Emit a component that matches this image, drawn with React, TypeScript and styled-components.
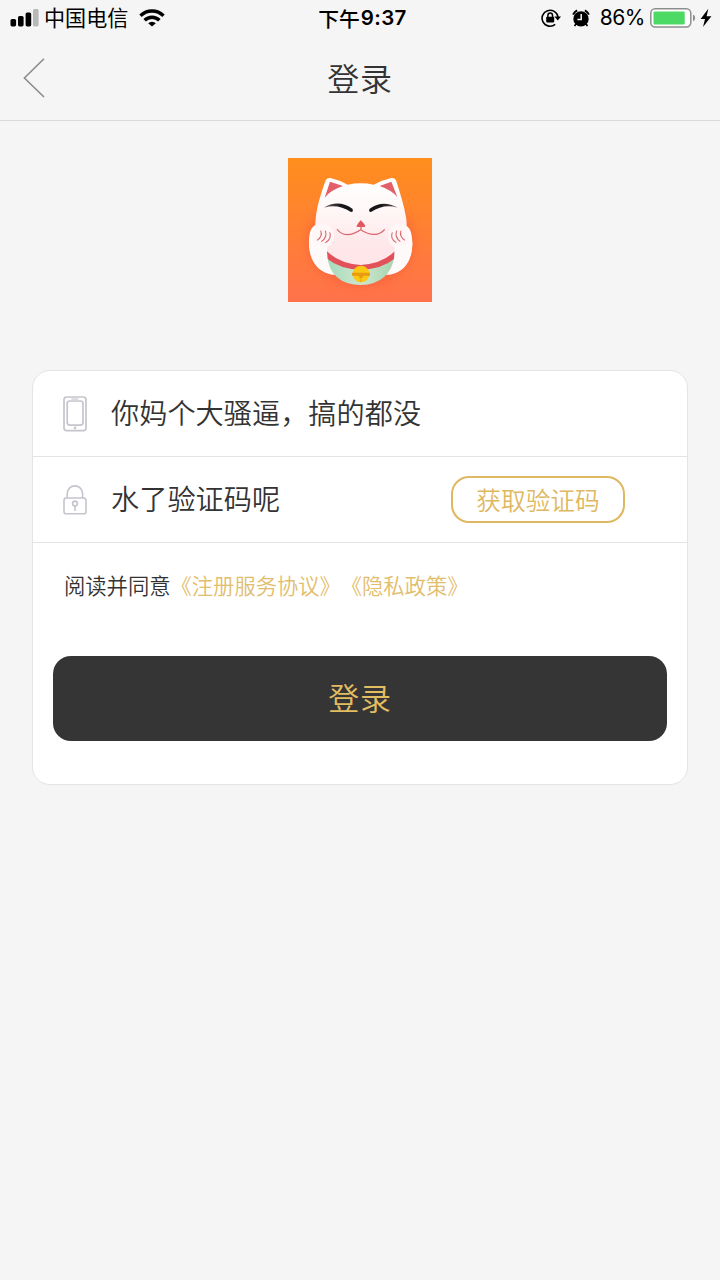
import React, { useState } from 'react';
import styled, { createGlobalStyle } from 'styled-components';

const GlobalStyle = createGlobalStyle`
  * {
    box-sizing: border-box;
  }
  body {
    margin: 0;
    background: #f5f5f5;
    font-family: "Noto Sans CJK SC", "Noto Sans", sans-serif;
  }
`;

const Page = styled.div`
  display: flex;
  flex-direction: column;
  width: 720px;
  height: 1280px;
  background: #f5f5f5;
  color: #333;
  overflow: hidden;
`;

const StatusBar = styled.div`
  display: grid;
  grid-template-columns: 1fr auto 1fr;
  grid-template-rows: 36px;
  align-items: center;
  height: 36px;
  padding: 0 8px 0 10px;
  color: #000;
`;

const StatusGroup = styled.div<{ $right?: boolean }>`
  display: flex;
  align-items: center;
  height: 36px;
  justify-content: ${(p) => (p.$right ? 'flex-end' : 'flex-start')};

  svg {
    flex: none;
    display: block;
  }
`;

const Carrier = styled.span`
  margin: 0 11px 0 5px;
  font-size: 21.1px;
  line-height: 34px;
  height: 36px;
`;

const Clock = styled.div`
  display: flex;
  align-items: center;
  height: 36px;
  padding-left: 3px;
  font-size: 20.8px;
  font-weight: 500;
  line-height: 35px;
`;

const Digits = styled.span`
  margin-left: 1px;
  font-family: Inter, "Noto Sans", sans-serif;
  font-size: 20.5px;
  font-weight: 600;
  line-height: 36px;
  letter-spacing: 0.35px;
`;

const Percent = styled.span`
  margin: 0 5px 0 10px;
  font-family: Inter, "Noto Sans", sans-serif;
  font-size: 21px;
  line-height: 36px;
  letter-spacing: -0.5px;
`;

const Header = styled.header`
  display: grid;
  grid-template-columns: 80px 1fr 80px;
  align-items: center;
  height: 85px;
  border-bottom: 1px solid #dadada;
`;

const BackButton = styled.button`
  display: flex;
  padding: 0 0 0 22px;
  border: none;
  background: none;
`;

const Title = styled.h1`
  height: 84px;
  margin: 0;
  font-size: 32px;
  font-weight: 350;
  line-height: 82px;
  letter-spacing: 0.8px;
  text-align: center;
`;

const Logo = styled.div`
  align-self: center;
  width: 144px;
  height: 144px;
  margin: 37px 0 68px;

  svg {
    display: block;
  }
`;

const Card = styled.main`
  display: flex;
  flex-direction: column;
  height: 415px;
  margin: 0 32px;
  border: 1px solid #e4e4e7;
  border-radius: 18px;
  background: #fff;
`;

const Row = styled.div`
  display: flex;
  align-items: center;
  height: 86px;
  padding: 0 62px 0 30px;
  border-bottom: 1px solid #e4e4e7;
`;

const RowIcon = styled.div`
  display: flex;
  width: 25px;
  margin-right: 23px;
`;

const Field = styled.div`
  flex: 1;
  height: 85px;
  font-size: 28.2px;
  font-weight: 350;
  line-height: 82px;
  white-space: nowrap;
`;

const CodeButton = styled.button`
  width: 174px;
  height: 47px;
  padding: 0 0 1px;
  border: 2px solid #dfb862;
  border-radius: 18px;
  background: #fff;
  color: #dfb862;
  font-family: inherit;
  font-size: 24.7px;
  font-weight: 350;
  line-height: 42px;
`;

const Terms = styled.p`
  margin: 25px 0 54px 31px;
  font-size: 21.3px;
  font-weight: 350;
  line-height: 34px;
  white-space: nowrap;
`;

const TermsLink = styled.a`
  margin-right: 10.5px;
  color: #e2bd6c;
`;

const LoginButton = styled.button`
  height: 85px;
  margin: 0 20px;
  padding: 0 0 3px;
  border: none;
  border-radius: 18px;
  background: #353535;
  color: #e2bd62;
  font-family: inherit;
  font-size: 31px;
  font-weight: 350;
  line-height: 82px;
  letter-spacing: 0.8px;
`;

const SignalIcon = () => (
  <svg width="29" height="18" viewBox="0 0 29 18">
    <rect x="0.5" y="10" width="5.6" height="7.4" rx="1.6" />
    <rect x="8" y="7" width="5.6" height="10.4" rx="1.6" />
    <rect x="15.6" y="3.5" width="5.6" height="13.9" rx="1.6" />
    <rect x="23" y="0" width="5.6" height="17.4" rx="1.6" fill="#b8b8b8" />
  </svg>
);

const WifiIcon = () => (
  <svg width="26" height="18" viewBox="0 0 26 18" fill="none" stroke="#000" strokeWidth="3.4">
    <path d="M1.5 6.8 A16.2 16.2 0 0 1 24.5 6.8" />
    <path d="M5.6 11.3 A10.4 10.4 0 0 1 20.4 11.3" />
    <path d="M13 17.6 L9.2 14.2 A5.4 5.4 0 0 1 16.8 14.2 Z" fill="#000" stroke="none" />
  </svg>
);

const RotationLockIcon = () => (
  <svg width="20" height="20" viewBox="0 0 20 20" fill="none" stroke="#000" strokeWidth="1.6">
    <path d="M14.2 16.4 A8 8 0 1 1 17 9" />
    <path d="M13.4 8.6 H20 L16.8 12.6 Z" fill="#000" stroke="none" />
    <rect x="5.2" y="8.8" width="8" height="5.6" rx="0.8" fill="#000" stroke="none" />
    <path d="M6.9 9 V7.2 A2.3 2.3 0 0 1 11.5 7.2 V9" strokeWidth="1.5" />
  </svg>
);

const AlarmIcon = () => (
  <svg width="18" height="19" viewBox="0 0 18 19">
    <circle cx="9" cy="9.9" r="7.7" />
    <path d="M1.1 5.6 A10 10 0 0 1 5.1 1.4 M12.9 1.4 A10 10 0 0 1 16.9 5.6" fill="none" stroke="#000" strokeWidth="2.1" />
    <path d="M3.8 15 L2.6 17.2 M14.2 15 L15.4 17.2" stroke="#000" strokeWidth="1.6" />
    <path d="M9.2 5 V10.4 H5.4" fill="none" stroke="#f5f5f5" strokeWidth="1.5" />
  </svg>
);

const BatteryIcon = () => (
  <svg width="46" height="20" viewBox="0 0 46 20">
    <rect x="0.8" y="0.8" width="40" height="18.2" rx="4.4" fill="#fff" stroke="#8e8e8e" strokeWidth="1.5" />
    <rect x="3.5" y="3.4" width="31.2" height="13" rx="1.2" fill="#4cd964" />
    <path d="M43 6.6 Q45.2 7.6 45.2 9.9 Q45.2 12.2 43 13.2 Z" fill="#8e8e8e" />
  </svg>
);

const BoltIcon = () => (
  <svg width="12" height="20" viewBox="0 0 12 20">
    <path d="M8.3 0.8 L0.6 11 H5 L3 19 L11.4 8.2 H6.6 Z" />
  </svg>
);

const BackIcon = () => (
  <svg width="24" height="42" viewBox="0 0 24 42" fill="none" stroke="#8c8c8c" strokeWidth="1.6">
    <path d="M22 1.8 L2.4 21 L22 40" />
  </svg>
);

const PhoneIcon = () => (
  <svg width="24" height="36" viewBox="0 0 24 36" fill="none" stroke="#c5c5cd" strokeWidth="1.7">
    <rect x="1" y="1" width="22" height="33.6" rx="2.6" />
    <rect x="4.2" y="5" width="15.8" height="24.2" rx="2.6" />
    <path d="M8.4 3 H15.4" strokeWidth="1.2" />
    <circle cx="12" cy="31.9" r="1.3" fill="#c5c5cd" stroke="none" />
  </svg>
);

const LockIcon = () => (
  <svg width="24" height="30" viewBox="0 0 24 30" fill="none" stroke="#c5c5cd" strokeWidth="1.6">
    <rect x="1" y="13" width="22" height="15.8" rx="2.4" />
    <path d="M4.2 13 V8.6 A7.7 7.7 0 0 1 19.6 8.6 V13" />
    <circle cx="12" cy="18.5" r="2.4" />
    <path d="M12 21 V26" />
  </svg>
);

const LuckyCat = () => (
  <svg width="144" height="144" viewBox="24 24 432 432">
    <defs>
      <linearGradient id="bg" x1="0" y1="0" x2="0" y2="1">
        <stop offset="0" stopColor="#ff8e1c" />
        <stop offset="1" stopColor="#ff724b" />
      </linearGradient>
      <linearGradient id="face" x1="0" y1="0" x2="0" y2="1">
        <stop offset="0" stopColor="#ffffff" />
        <stop offset="0.3" stopColor="#fff9f9" />
        <stop offset="0.7" stopColor="#ffe8ea" />
        <stop offset="1" stopColor="#ffe6e8" />
      </linearGradient>
      <linearGradient id="paw" x1="0" y1="0" x2="0" y2="1">
        <stop offset="0" stopColor="#ffffff" />
        <stop offset="1" stopColor="#fff3f3" />
      </linearGradient>
      <linearGradient id="bib" x1="0" y1="0" x2="1" y2="0">
        <stop offset="0" stopColor="#a5d9bb" />
        <stop offset="0.5" stopColor="#cde6cf" />
        <stop offset="1" stopColor="#a5d5ae" />
      </linearGradient>
      <linearGradient id="browLeft" x1="0" y1="0" x2="1" y2="0">
        <stop offset="0" stopColor="#665555" />
        <stop offset="0.6" stopColor="#171719" />
      </linearGradient>
      <linearGradient id="browRight" x1="1" y1="0" x2="0" y2="0">
        <stop offset="0" stopColor="#665555" />
        <stop offset="0.6" stopColor="#171719" />
      </linearGradient>
      <filter id="shade" x="-20%" y="-20%" width="140%" height="140%">
        <feGaussianBlur stdDeviation="14" />
      </filter>
    </defs>
    <rect x="24" y="24" width="432" height="432" fill="url(#bg)" />
    <ellipse cx="242" cy="275" rx="162" ry="136" fill="#f2503a" opacity="0.4" filter="url(#shade)" />
    {/* body and arms */}
    <path d="M112 222 C92 230 86 248 87 284 C89 332 112 366 158 374 L328 374 C374 366 396 330 397 284 C397 248 390 228 368 222 Z" fill="url(#paw)" />
    {/* head */}
    <path d="M137 91 Q141 83 151 84 Q178 90 203 104 Q242 96 281 104 Q307 90 334 84 Q344 83 348 91 C360 129 373 169 379 207 C384 259 369 305 343 329 Q294 362 242 360 Q190 362 141 325 C115 303 105 266 106 220 C108 174 123 131 137 91 Z" fill="url(#face)" />
    <path d="M150 95 L189 108 Q152 120 134 143 Z" fill="#e2606a" />
    <path d="M334 95 L299 108 Q334 120 352 141 Z" fill="#e2606a" />
    <path d="M132 173 Q174 147 217 176 Q222 185 213 186 Q173 160 132 173 Z" fill="url(#browLeft)" />
    <path d="M353 173 Q309 148 269 176 Q264 185 273 186 Q312 160 353 173 Z" fill="url(#browRight)" />
    <path d="M242 211 Q249 217 256 227 Q257 231 250 231 H235 Q228 231 230 227 Q236 217 242 211 Z" fill="#e2565f" />
    <path d="M243 230 V238 M171 237 C186 259 213 259 242 239 C272 259 299 257 314 238" fill="none" stroke="#d9666c" strokeWidth="3.8" />
    {/* collar, bib and bell */}
    <path d="M141 315 Q151 404 242 405 Q331 403 344 315 Q304 351 242 350 Q181 350 141 315 Z" fill="url(#bib)" />
    <path d="M141 304 Q179 341 242 345 Q307 341 344 304 L343 326 Q306 357 242 359 Q179 357 142 326 Z" fill="#e2515a" />
    {/* paws */}
    <ellipse cx="129" cy="257" rx="33" ry="37" fill="#fff6f7" />
    <ellipse cx="356" cy="257" rx="32" ry="37" fill="#fff6f7" />
    <path d="M87 276 C89 332 112 366 158 374 Q140 350 141 292 Z" fill="#fffafa" />
    <path d="M397 276 C396 332 374 366 328 374 Q344 350 344 292 Z" fill="#fffafa" />
    <path d="M122 242 Q129 260 111 271 M136 242 Q143 262 124 275 M149 247 Q157 266 136 278" fill="none" stroke="#d9666c" strokeWidth="3.2" />
    <path d="M363 242 Q357 260 375 271 M350 242 Q343 262 361 275 M337 247 Q329 266 349 278" fill="none" stroke="#d9666c" strokeWidth="3.2" />
    <circle cx="243" cy="372" r="25" fill="#fdc811" />
    <path d="M216 368 H270 V377 H250 Q250 384 243 384 Q236 384 236 377 H216 Z" fill="#e89a12" />
    <path d="M242 381 V397" stroke="#e89a12" strokeWidth="2" />
  </svg>
);

const App: React.FC = () => {
  const [phone] = useState('你妈个大骚逼，搞的都没');
  const [code] = useState('水了验证码呢');

  return (
    <>
      <GlobalStyle />
      <Page>
        <StatusBar>
          <StatusGroup>
            <SignalIcon />
            <Carrier>中国电信</Carrier>
            <WifiIcon />
          </StatusGroup>
          <Clock>
            下午<Digits>9:37</Digits>
          </Clock>
          <StatusGroup $right>
            <RotationLockIcon />
            <svg width="11" height="1" />
            <AlarmIcon />
            <Percent>86%</Percent>
            <BatteryIcon />
            <svg width="4" height="1" />
            <BoltIcon />
          </StatusGroup>
        </StatusBar>
        <Header>
          <BackButton aria-label="返回">
            <BackIcon />
          </BackButton>
          <Title>登录</Title>
        </Header>
        <Logo>
          <LuckyCat />
        </Logo>
        <Card>
          <Row>
            <RowIcon><PhoneIcon /></RowIcon>
            <Field>{phone}</Field>
          </Row>
          <Row>
            <RowIcon><LockIcon /></RowIcon>
            <Field>{code}</Field>
            <CodeButton>获取验证码</CodeButton>
          </Row>
          <Terms>
            阅读并同意<TermsLink>《注册服务协议》</TermsLink><TermsLink>《隐私政策》</TermsLink>
          </Terms>
          <LoginButton>登录</LoginButton>
        </Card>
      </Page>
    </>
  );
};

export default App;
